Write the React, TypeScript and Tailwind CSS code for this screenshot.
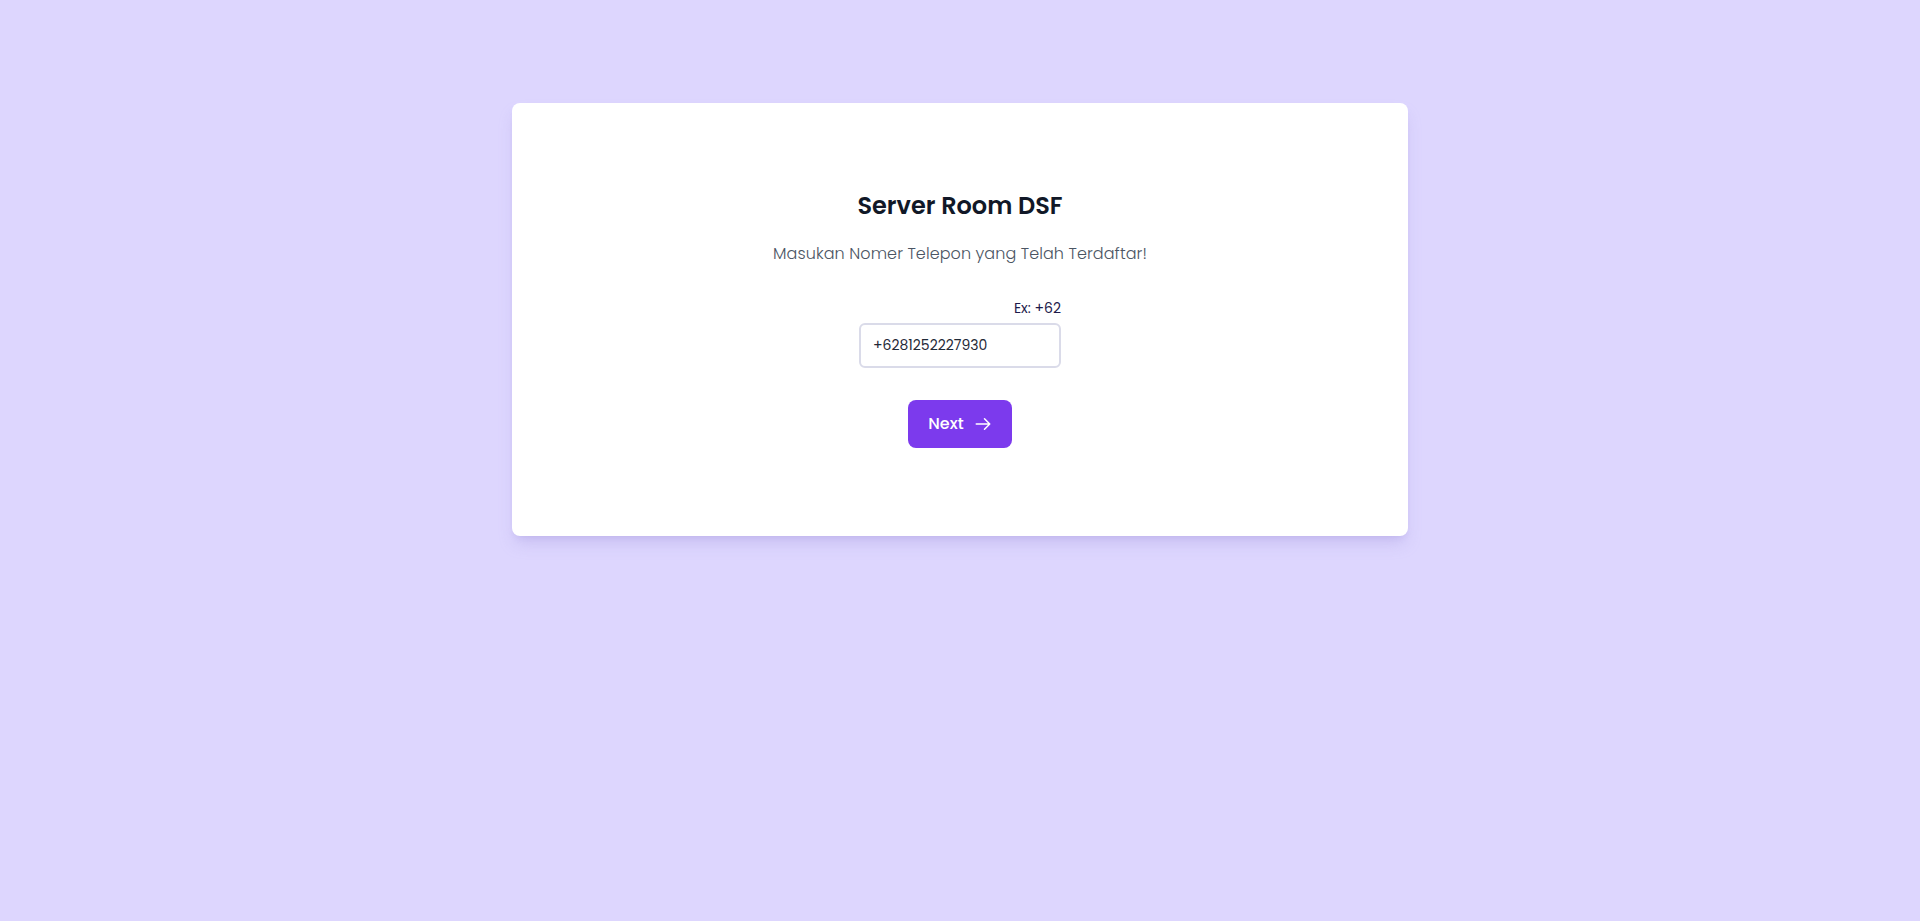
import { HiOutlineArrowRight } from "react-icons/hi";

const App = () => {
  return (
    <div
      className="min-h-[921px] w-full bg-[#ddd6fe] pt-[103px]"
      style={{ fontFamily: '"Poppins", "Open Sans", sans-serif' }}
    >
      <div className="mx-auto w-[896px] rounded-lg bg-white pt-[87px] pb-[88px] shadow-lg shadow-[#a99ee0]/40">
        <div className="flex flex-col items-center">
          <h1 className="text-2xl leading-8 font-semibold text-[#111827]">Server Room DSF</h1>
          <p className="mt-5 text-base leading-6 font-light tracking-[0.005em] text-[#4b5563]">
            Masukan Nomer Telepon yang Telah Terdaftar!
          </p>

          <div className="mt-8 flex w-[202px] flex-col">
            <label className="mb-[5px] text-right text-sm leading-5 text-[#1e1b4b]">Ex: +62</label>
            <input
              type="tel"
              defaultValue="+6281252227930"
              className="h-[45px] w-full rounded-md border-2 border-[#dadbe9] bg-white px-3 text-sm text-[#1f2937] outline-none"
            />
          </div>

          <button className="mt-8 flex h-12 items-center gap-[10px] rounded-lg bg-[#7c3aed] px-5 text-base font-medium text-white">
            Next
            <HiOutlineArrowRight size={18} />
          </button>
        </div>
      </div>
    </div>
  );
};

export default App;
